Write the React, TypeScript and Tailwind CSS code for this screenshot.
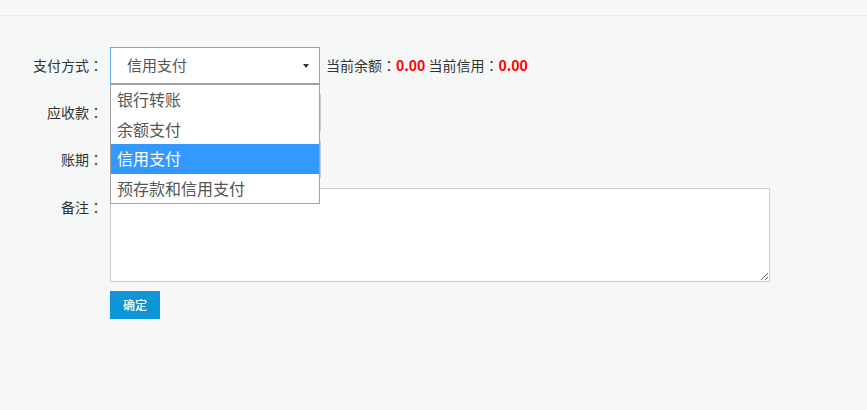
const options = ['银行转账', '余额支付', '信用支付', '预存款和信用支付'];

function Colon() {
  return <span style={{ fontFamily: '"Noto Sans CJK TC", sans-serif' }}>：</span>;
}

export default function App() {
  const selected = '信用支付';

  return (
    <div
      className="min-h-[410px] bg-[#f6f8f8] text-[#333]"
      style={{ fontFamily: '"Microsoft YaHei", "Noto Sans CJK SC", "Noto Sans", sans-serif' }}
    >
      {/* top bar */}
      <div className="h-[16px] border-b border-[#e9eded]" />

      <div className="pt-[31px] flex flex-col gap-[10px]">
        {/* 支付方式 */}
        <div className="flex items-center">
          <label className="w-[104px] pr-[1px] text-right text-[14px]">支付方式<Colon /></label>
          <div className="relative ml-[6px]">
            <div className="w-[210px] h-[37px] bg-white border border-[#66afe9] flex items-center pl-[16px] pr-[10px] text-[15px] text-[#555]">
              <span className="flex-1">{selected}</span>
              <span className="w-0 h-0 border-l-[3px] border-r-[3px] border-t-[4px] border-l-transparent border-r-transparent border-t-[#333]" />
            </div>
            {/* open list */}
            <ul className="absolute left-0 top-[37px] z-10 w-[210px] bg-white border border-[#a3a3a3] text-[16px] text-[#555]">
              {options.map((o) => (
                <li
                  key={o}
                  className={`h-[29.5px] leading-[29.5px] pl-[6px] ${o === selected ? 'bg-[#3399ff] text-white' : ''}`}
                >
                  {o}
                </li>
              ))}
            </ul>
          </div>
          <div className="ml-[6px] text-[14px]">
            当前余额<Colon /><b className="text-[#ff0000]">0.00</b> 当前信用<Colon /><b className="text-[#ff0000]">0.00</b>
          </div>
        </div>

        {/* 应收款 */}
        <div className="flex items-center">
          <label className="w-[104px] pr-[1px] text-right text-[14px]">应收款<Colon /></label>
          <input className="ml-[6px] w-[211px] h-[37px] bg-white border border-[#ccc] outline-none" />
        </div>

        {/* 账期 */}
        <div className="flex items-center">
          <label className="w-[104px] pr-[1px] text-right text-[14px]">账期<Colon /></label>
          <input className="ml-[6px] w-[211px] h-[37px] bg-white border border-[#ccc] outline-none" />
        </div>

        {/* 备注 */}
        <div className="flex items-start">
          <label className="w-[104px] pr-[1px] pt-[9px] text-right text-[14px]">备注<Colon /></label>
          <textarea className="ml-[6px] w-[660px] h-[94px] bg-white border border-[#ccc] outline-none" />
        </div>

        <div className="pl-[110px] -mt-[1px]">
          <button className="w-[50px] h-[28px] bg-[#0e95d6] text-white text-[12px] font-medium">确定</button>
        </div>
      </div>
    </div>
  );
}
